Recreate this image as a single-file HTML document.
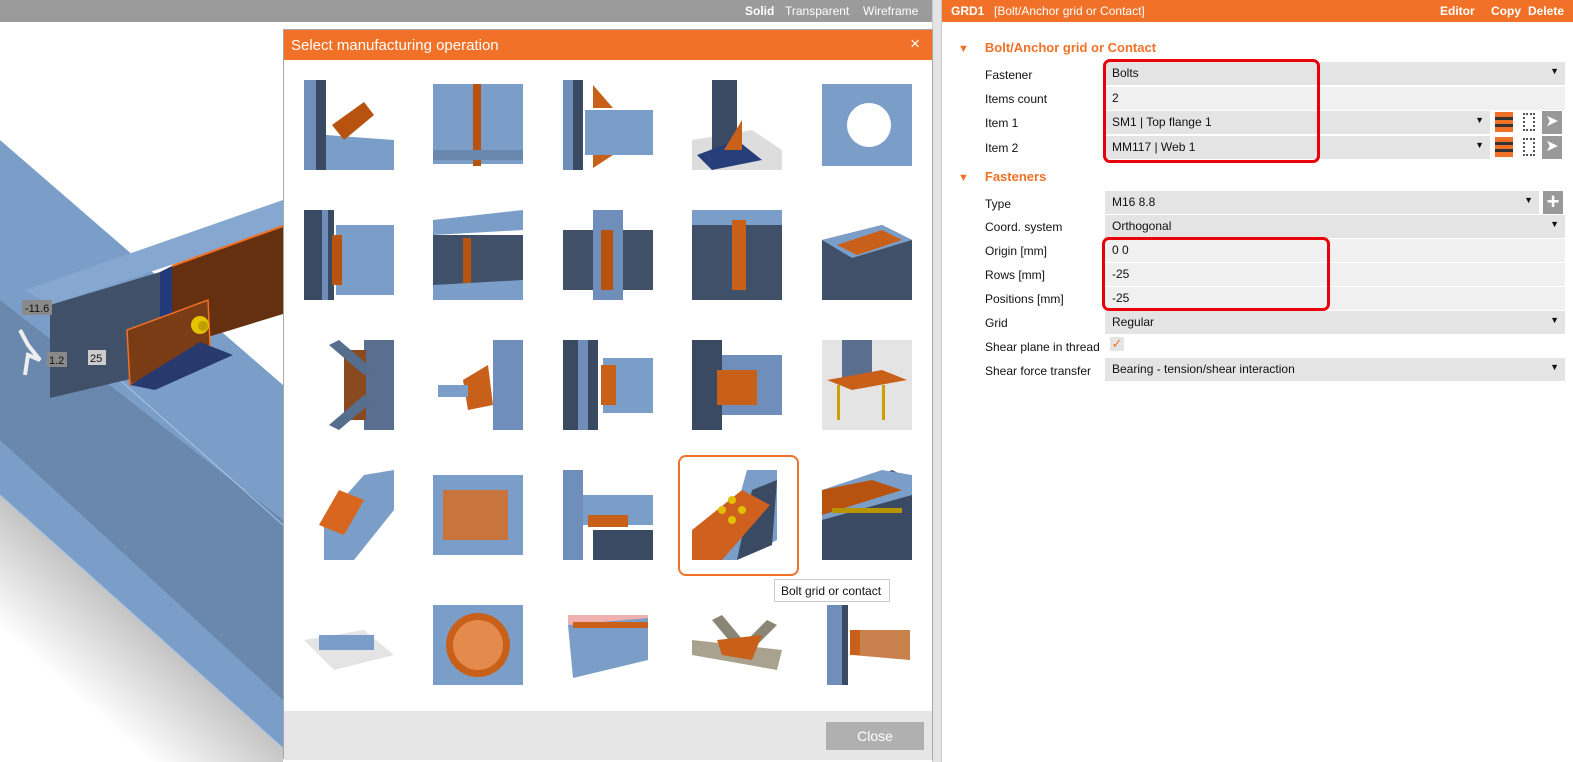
<!DOCTYPE html>
<html><head><meta charset="utf-8"><style>
*{margin:0;padding:0;box-sizing:border-box}
body{width:1573px;height:762px;overflow:hidden;background:#fff;font-family:"Liberation Sans",sans-serif;position:relative;font-size:12px}
.abs{position:absolute}
.topL{left:0;top:0;width:932px;height:22px;background:#9b9b9b;color:#fff;font-weight:bold;font-size:12px}
.topL span{position:absolute;top:4px}
.sep{left:932px;top:0;width:10px;height:762px;background:#e4e4e4;border-left:1px solid #c8c8c8;border-right:1px solid #c8c8c8}
.topR{left:942px;top:0;width:631px;height:22px;background:#f07127;color:#fff;font-size:12px}
.topR span{position:absolute;top:4px}
.dlg{left:283px;top:29px;width:650px;height:730px;border:1px solid #a8a8a8;background:#fff}
.dhead{position:absolute;left:0;top:0;width:100%;height:30px;background:#f07127;color:#fff;font-size:15px;padding:7px 7px}
.foot{position:absolute;left:0;top:681px;width:100%;height:49px;background:#e6e6e6}
.btn{position:absolute;left:542px;top:11px;width:98px;height:28px;background:#b0b0b0;color:#fff;font-size:14px;text-align:center;line-height:28px}
.cell{position:absolute;width:90px;height:90px}
.sel{position:absolute;left:394px;top:425px;width:121px;height:121px;border:2px solid #f07127;border-radius:8px}
.tip{position:absolute;left:490px;top:549px;width:116px;height:23px;border:1px solid #ccc;background:#fff;font-size:12px;padding:4px 6px;color:#111}
.sec{position:absolute;left:958px;color:#f07127;font-weight:bold;font-size:13px}
.sec i{font-style:normal;font-size:11px;margin-right:16px}
.lbl{position:absolute;left:985px;font-size:12px;color:#111}
.fld{position:absolute;left:1105px;width:460px;height:23px;background:#e4e4e4;font-size:12px;padding:4px 7px;color:#111}
.fld.l{background:#f0f0f0}
.fld b{position:absolute;right:6px;top:4px;font-size:9px;font-weight:normal}
.red{position:absolute;border:3px solid #e8000a;border-radius:7px}
.ic{position:absolute;width:18px;height:20px}
</style></head><body>
<svg class="abs" style="left:0;top:0" width="283" height="762">
<defs><linearGradient id="sh" gradientUnits="userSpaceOnUse" x1="141" y1="621" x2="75" y2="695"><stop offset="0" stop-color="#c4c4c4"/><stop offset="1" stop-color="#fff"/></linearGradient></defs>
<polygon points="0,490 283,745 283,762 0,762" fill="url(#sh)"/>
<polygon points="0,140 283,385 283,748 0,495" fill="#7b9ec9"/>
<polygon points="0,300 283,520 283,700 0,440" fill="#6a88ad"/>
<line x1="120" y1="380" x2="283" y2="525" stroke="#a9c4e6" stroke-width="1"/>
<line x1="0" y1="495" x2="283" y2="748" stroke="#a9c4e6"/>
<polygon points="25,290 140,250 283,200 283,228 50,305" fill="#86a7d0"/>
<polygon points="50,305 160,272 160,372 50,398" fill="#3f5068"/>
<polygon points="160,272 172,266 172,348 160,372" fill="#223a7a"/>
<polygon points="172,266 283,226 283,314 172,348" fill="#65300f"/>
<line x1="172" y1="266" x2="283" y2="226" stroke="#f07127" stroke-width="2"/>
<polygon points="127,330 208,300 210,345 130,385" fill="#7a3c15" stroke="#f07127" stroke-width="1.5"/>
<polygon points="130,385 200,342 233,355 155,390" fill="#27396d"/>
<circle cx="200" cy="325" r="9" fill="#e6c300"/><circle cx="203" cy="326" r="5" fill="#bfa000"/>
<rect x="22" y="300" width="30" height="15" fill="#8a8a8a"/><text x="25" y="312" font-size="11" fill="#111" font-family="Liberation Sans">-11.6</text>
<rect x="47" y="352" width="20" height="15" fill="#8a8a8a"/><text x="49" y="364" font-size="11" fill="#111" font-family="Liberation Sans">1.2</text>
<rect x="88" y="350" width="18" height="15" fill="#ccc"/><text x="90" y="362" font-size="11" fill="#111" font-family="Liberation Sans">25</text>
<path d="M20,330 L28,345 L40,360 L28,355 L25,375" stroke="#eee" stroke-width="4" fill="none"/>
</svg>
<div class="abs topL"><span style="left:745px">Solid</span><span style="left:785px;font-weight:normal">Transparent</span><span style="left:863px;font-weight:normal">Wireframe</span></div>
<div class="abs sep"></div>
<div class="abs topR"><span style="left:9px;font-weight:bold">GRD1</span><span style="left:52px">[Bolt/Anchor grid or Contact]</span><span style="left:498px;font-weight:bold">Editor</span><span style="left:549px;font-weight:bold">Copy</span><span style="left:586px;font-weight:bold">Delete</span></div>

<div class="abs dlg">
<div class="dhead">Select manufacturing operation<span style="position:absolute;right:12px;top:4px;font-size:17px;font-weight:lighter">×</span></div>
<div class="sel"></div>
<svg class="cell" style="left:20px;top:50px" viewBox="0 0 90 90"><rect x="0" y="0" width="20" height="90" fill="#6f8fba"/><rect x="12" y="0" width="10" height="90" fill="#3a4a62"/><polygon points="22,55 90,60 90,90 22,90" fill="#7b9ec9"/><polygon points="28,45 60,22 70,35 40,60" fill="#b8530f"/></svg>
<svg class="cell" style="left:149px;top:50px" viewBox="0 0 90 90"><rect x="0" y="4" width="90" height="80" fill="#7b9ec9"/><rect x="40" y="4" width="8" height="82" fill="#b8530f"/><rect x="0" y="70" width="90" height="10" fill="#6a88ad"/></svg>
<svg class="cell" style="left:279px;top:50px" viewBox="0 0 90 90"><rect x="0" y="0" width="20" height="90" fill="#6f8fba"/><rect x="10" y="0" width="10" height="90" fill="#3a4a62"/><rect x="22" y="30" width="68" height="45" fill="#7b9ec9"/><polygon points="30,5 50,28 30,28" fill="#c8601a"/><polygon points="30,75 50,75 30,88" fill="#c8601a"/></svg>
<svg class="cell" style="left:408px;top:50px" viewBox="0 0 90 90"><polygon points="0,60 60,50 90,70 90,90 0,90" fill="#ddd"/><rect x="20" y="0" width="25" height="70" fill="#3a4a62"/><polygon points="5,75 45,60 70,80 20,90" fill="#263f7a"/><polygon points="32,70 50,40 50,70" fill="#c8601a"/></svg>
<svg class="cell" style="left:538px;top:50px" viewBox="0 0 90 90"><rect x="0" y="4" width="90" height="82" fill="#7b9ec9"/><circle cx="47" cy="45" r="22" fill="#fff"/></svg>
<svg class="cell" style="left:20px;top:180px" viewBox="0 0 90 90"><rect x="0" y="0" width="30" height="90" fill="#3a4a62"/><rect x="18" y="0" width="6" height="90" fill="#6f8fba"/><rect x="32" y="15" width="58" height="70" fill="#7b9ec9"/><rect x="28" y="25" width="10" height="50" fill="#b8530f"/></svg>
<svg class="cell" style="left:149px;top:180px" viewBox="0 0 90 90"><polygon points="0,10 90,0 90,20 0,25" fill="#7b9ec9"/><rect x="0" y="25" width="90" height="55" fill="#3f5068"/><rect x="30" y="28" width="8" height="55" fill="#b8530f"/><polygon points="0,75 90,70 90,90 0,90" fill="#7b9ec9"/></svg>
<svg class="cell" style="left:279px;top:180px" viewBox="0 0 90 90"><rect x="0" y="20" width="90" height="60" fill="#3f5068"/><rect x="30" y="0" width="30" height="90" fill="#6f8fba"/><rect x="38" y="20" width="12" height="60" fill="#b8530f"/></svg>
<svg class="cell" style="left:408px;top:180px" viewBox="0 0 90 90"><rect x="0" y="10" width="90" height="80" fill="#3f5068"/><rect x="0" y="0" width="90" height="15" fill="#7b9ec9"/><rect x="40" y="10" width="14" height="70" fill="#c8601a"/></svg>
<svg class="cell" style="left:538px;top:180px" viewBox="0 0 90 90"><polygon points="0,30 60,15 90,30 90,90 0,90" fill="#3f5068"/><polygon points="0,30 60,15 90,30 30,48" fill="#7b9ec9"/><polygon points="15,35 60,20 80,30 35,45" fill="#c8601a"/></svg>
<svg class="cell" style="left:20px;top:310px" viewBox="0 0 90 90"><rect x="60" y="0" width="30" height="90" fill="#5a6f90"/><rect x="40" y="10" width="22" height="70" fill="#8a4a1f"/><polygon points="25,5 35,0 70,30 60,35" fill="#566e8e"/><polygon points="25,85 60,55 68,62 35,90" fill="#566e8e"/></svg>
<svg class="cell" style="left:149px;top:310px" viewBox="0 0 90 90"><rect x="60" y="0" width="30" height="90" fill="#6f8fba"/><polygon points="30,40 55,25 60,65 35,70" fill="#c8601a"/><rect x="5" y="45" width="30" height="12" fill="#7b9ec9"/></svg>
<svg class="cell" style="left:279px;top:310px" viewBox="0 0 90 90"><rect x="0" y="0" width="35" height="90" fill="#3a4a62"/><rect x="15" y="0" width="10" height="90" fill="#6f8fba"/><rect x="40" y="18" width="50" height="55" fill="#7b9ec9"/><rect x="38" y="25" width="15" height="40" fill="#c8601a"/></svg>
<svg class="cell" style="left:408px;top:310px" viewBox="0 0 90 90"><rect x="0" y="0" width="30" height="90" fill="#3a4a62"/><rect x="30" y="15" width="60" height="60" fill="#6f8fba"/><rect x="25" y="30" width="40" height="35" fill="#c8601a"/></svg>
<svg class="cell" style="left:538px;top:310px" viewBox="0 0 90 90"><rect x="0" y="0" width="90" height="90" fill="#e4e4e4"/><rect x="20" y="0" width="30" height="40" fill="#5a6f90"/><polygon points="5,40 60,30 85,40 30,50" fill="#c8601a"/><rect x="15" y="45" width="3" height="35" fill="#c9a000"/><rect x="60" y="45" width="3" height="35" fill="#c9a000"/></svg>
<svg class="cell" style="left:20px;top:440px" viewBox="0 0 90 90"><polygon points="20,90 20,50 60,5 90,0 90,40 50,90" fill="#7b9ec9"/><polygon points="15,55 35,20 60,30 40,65" fill="#d9661e"/></svg>
<svg class="cell" style="left:149px;top:440px" viewBox="0 0 90 90"><rect x="0" y="5" width="90" height="80" fill="#7b9ec9"/><rect x="10" y="20" width="65" height="50" fill="#c8743c"/></svg>
<svg class="cell" style="left:279px;top:440px" viewBox="0 0 90 90"><rect x="0" y="0" width="20" height="90" fill="#6f8fba"/><rect x="20" y="25" width="70" height="30" fill="#7b9ec9"/><rect x="25" y="45" width="40" height="12" fill="#c8601a"/><polygon points="30,60 90,60 90,90 30,90" fill="#3a4a62"/></svg>
<svg class="cell" style="left:408px;top:440px" viewBox="0 0 90 90"><polygon points="55,0 85,0 85,70 45,90 30,90" fill="#7b9ec9"/><polygon points="60,20 85,10 80,75 45,90" fill="#3a4a62"/><polygon points="0,60 50,20 78,35 30,90 0,90" fill="#d0601e"/><circle cx="40" cy="30" r="4" fill="#e0c000"/><circle cx="30" cy="40" r="4" fill="#e0c000"/><circle cx="50" cy="40" r="4" fill="#e0c000"/><circle cx="40" cy="50" r="4" fill="#e0c000"/></svg>
<svg class="cell" style="left:538px;top:440px" viewBox="0 0 90 90"><polygon points="0,30 70,0 90,10 90,90 0,90" fill="#3a4a62"/><polygon points="0,20 60,0 90,5 90,25 0,50" fill="#7b9ec9"/><polygon points="0,20 50,10 80,20 0,45" fill="#b8530f"/><rect x="10" y="38" width="70" height="5" fill="#b89500"/></svg>
<svg class="cell" style="left:20px;top:570px" viewBox="0 0 90 90"><polygon points="0,40 60,30 90,55 30,70" fill="#e4e4e4"/><rect x="15" y="35" width="55" height="15" fill="#7b9ec9"/></svg>
<svg class="cell" style="left:149px;top:570px" viewBox="0 0 90 90"><rect x="0" y="5" width="90" height="80" fill="#7b9ec9"/><circle cx="45" cy="45" r="32" fill="#c8601a"/><circle cx="45" cy="45" r="25" fill="#e38a4c"/></svg>
<svg class="cell" style="left:279px;top:570px" viewBox="0 0 90 90"><rect x="5" y="15" width="80" height="10" fill="#f0b0b0"/><polygon points="5,25 85,18 85,60 10,78" fill="#7b9ec9"/><rect x="10" y="22" width="75" height="6" fill="#c8601a"/></svg>
<svg class="cell" style="left:408px;top:570px" viewBox="0 0 90 90"><polygon points="0,40 90,50 85,70 0,55" fill="#a8a28e"/><polygon points="20,20 30,15 55,45 45,50" fill="#8a8676"/><polygon points="50,45 75,20 85,25 60,50" fill="#8a8676"/><polygon points="25,40 70,35 60,60 30,55" fill="#c8601a"/></svg>
<svg class="cell" style="left:538px;top:570px" viewBox="0 0 90 90"><rect x="5" y="5" width="20" height="80" fill="#6f8fba"/><rect x="20" y="5" width="6" height="80" fill="#3a4a62"/><polygon points="30,30 88,30 88,60 30,55" fill="#c8804c"/><rect x="28" y="30" width="10" height="25" fill="#c8601a"/></svg>
<div class="tip">Bolt grid or contact</div>
<div class="foot"><div class="btn">Close</div></div>
</div>

<div class="sec" style="top:40px"><i>▼</i>Bolt/Anchor grid or Contact</div>
<div class="lbl" style="top:68px">Fastener</div><div class="fld" style="top:62px">Bolts<b>▼</b></div>
<div class="lbl" style="top:92px">Items count</div><div class="fld l" style="top:87px">2</div>
<div class="lbl" style="top:116px">Item 1</div><div class="fld" style="top:111px;width:385px">SM1 | Top flange 1<b>▼</b></div>
<div class="lbl" style="top:141px">Item 2</div><div class="fld" style="top:136px;width:385px">MM117 | Web 1<b>▼</b></div>
<div class="ic" style="left:1495px;top:112px;background:#f07127"><div style="height:3px;background:#333;margin-top:5px"></div><div style="height:3px;background:#333;margin-top:4px"></div></div>
<div class="ic" style="left:1495px;top:137px;background:#f07127"><div style="height:3px;background:#333;margin-top:5px"></div><div style="height:3px;background:#333;margin-top:4px"></div></div>
<div class="ic" style="left:1523px;top:113px;width:12px;height:18px;border:2px dotted #555"></div>
<div class="ic" style="left:1523px;top:138px;width:12px;height:18px;border:2px dotted #555"></div>
<div class="ic" style="left:1542px;top:111px;width:20px;height:23px;background:#999;color:#fff;font-size:16px;text-align:center">➤</div>
<div class="ic" style="left:1542px;top:136px;width:20px;height:23px;background:#999;color:#fff;font-size:16px;text-align:center">➤</div>
<div class="red" style="left:1103px;top:59px;width:217px;height:104px"></div>

<div class="sec" style="top:169px"><i>▼</i>Fasteners</div>
<div class="lbl" style="top:197px">Type</div><div class="fld" style="top:191px;width:434px">M16 8.8<b>▼</b></div>
<div class="abs" style="left:1543px;top:191px;width:20px;height:23px;background:#999;color:#fff;font-size:22px;font-weight:bold;text-align:center;line-height:22px">+</div>
<div class="lbl" style="top:220px">Coord. system</div><div class="fld" style="top:215px">Orthogonal<b>▼</b></div>
<div class="lbl" style="top:244px">Origin [mm]</div><div class="fld l" style="top:239px">0 0</div>
<div class="lbl" style="top:268px">Rows [mm]</div><div class="fld l" style="top:263px">-25</div>
<div class="lbl" style="top:292px">Positions [mm]</div><div class="fld l" style="top:287px">-25</div>
<div class="red" style="left:1102px;top:237px;width:228px;height:74px"></div>
<div class="lbl" style="top:316px">Grid</div><div class="fld" style="top:311px">Regular<b>▼</b></div>
<div class="lbl" style="top:340px">Shear plane in thread</div><div class="abs" style="left:1110px;top:337px;width:14px;height:14px;background:#e4e4e4;color:#f07127;font-size:13px;line-height:13px;text-align:center">✓</div>
<div class="lbl" style="top:364px">Shear force transfer</div><div class="fld" style="top:358px">Bearing - tension/shear interaction<b>▼</b></div>
</body></html>
